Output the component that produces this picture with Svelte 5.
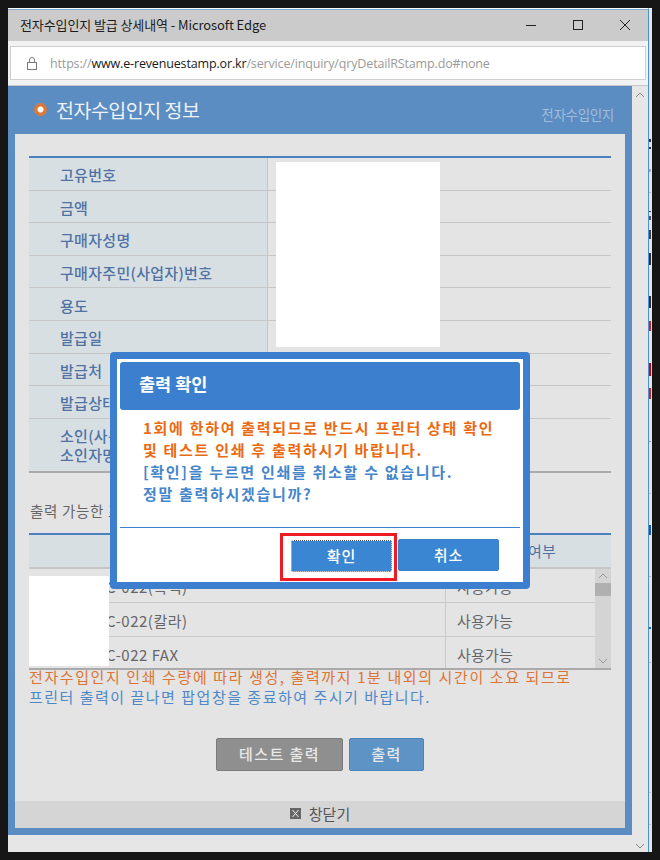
<script lang="ts">
	const infoRows = ['고유번호', '금액', '구매자성명', '구매자주민(사업자)번호', '용도', '발급일', '발급처', '발급상태'];
	const printers = ['C-022(흑백)', 'C-022(칼라)', 'C-022 FAX'];
	// bits of the window behind that peek out on the right edge
	const peeks = [
		{ y: 130, h: 3, c: '#333' },
		{ y: 138, h: 2, c: '#333' },
		{ y: 160, h: 3, c: '#aaa' },
		{ y: 183, h: 1, c: '#bbb' },
		{ y: 202, h: 1, c: '#444' },
		{ y: 207, h: 4, c: '#555' },
		{ y: 221, h: 9, c: '#444' },
		{ y: 244, h: 12, c: '#333' },
		{ y: 287, h: 12, c: '#333' },
		{ y: 312, h: 10, c: '#d0202a' },
		{ y: 354, h: 13, c: '#d0000a' },
		{ y: 379, h: 11, c: '#d0202a' },
		{ y: 432, h: 1, c: '#999' },
		{ y: 484, h: 1, c: '#bbb' },
		{ y: 516, h: 10, c: '#1d5a9c' },
		{ y: 567, h: 1, c: '#bbb' },
		{ y: 618, h: 2, c: '#1d6ab4' },
		{ y: 653, h: 1, c: '#bbb' },
		{ y: 783, h: 1, c: '#c4c4c4' },
		{ y: 815, h: 1, c: '#c4c4c4' }
	];
</script>

<div class="screen">
	<div class="window">
		<div class="titlebar">
			<span class="title">전자수입인지 발급 상세내역 - Microsoft Edge</span>
			<div class="controls">
				<svg width="12" height="12" viewBox="0 0 12 12" fill="none" stroke="#222"><line x1="1" y1="6.5" x2="11" y2="6.5" /></svg>
				<svg width="12" height="12" viewBox="0 0 12 12" fill="none" stroke="#222"><rect x="1.5" y="1.5" width="9" height="9" /></svg>
				<svg width="12" height="12" viewBox="0 0 12 12" fill="none" stroke="#222"><path d="M1 1l10 10M11 1L1 11" /></svg>
			</div>
		</div>
		<div class="addressbar">
			<div class="address">
				<svg width="12" height="15" viewBox="0 0 12 15" fill="none" stroke="#777"><rect x="1.5" y="6.5" width="9" height="7" /><path d="M3.5 6.5V4a2.5 2.5 0 0 1 5 0v2.5" /></svg>
				<span class="url">https://<b>www.e-revenuestamp.or.kr</b>/service/inquiry/qryDetailRStamp.do#none</span>
			</div>
		</div>
		<div class="page">
			<div class="popup">
				<header class="popup-head">
					<span class="dot"></span>
					<h1>전자수입인지 정보</h1>
					<span class="crumb">전자수입인지</span>
				</header>
				<div class="panel">
					<div class="content">
						<div class="info">
							{#each infoRows as label}
								<div class="info-row">
									<div class="info-label">{label}</div>
									<div class="info-value"></div>
								</div>
							{/each}
							<div class="info-row tall">
								<div class="info-label">소인(사용)일시<br />소인자명</div>
								<div class="info-value"></div>
							</div>
							<div class="redact redact-info"></div>
						</div>

						<p class="caption">출력 가능한 프린터 목록</p>

						<div class="printers">
							<div class="printers-head">
								<span class="col-name">프린터명</span>
								<span class="col-state">사용여부</span>
							</div>
							<div class="printers-body">
								<div class="printers-rows">
									{#each printers as name}
										<div class="printer-row">
											<span class="col-name">{name}</span>
											<span class="col-state">사용가능</span>
										</div>
									{/each}
								</div>
								<div class="scrollbar">
									<svg width="10" height="6" viewBox="0 0 10 6" fill="none" stroke="#999"><path d="M1 5l4-4 4 4" /></svg>
									<div class="thumb"></div>
									<svg class="down" width="10" height="6" viewBox="0 0 10 6" fill="none" stroke="#999"><path d="M1 1l4 4 4-4" /></svg>
								</div>
							</div>
							<div class="redact redact-printers"></div>
						</div>

						<div class="notes">
							<p class="orange">전자수입인지 인쇄 수량에 따라 생성, 출력까지 1분 내외의 시간이 소요 되므로</p>
							<p class="blue">프린터 출력이 끝나면 팝업창을 종료하여 주시기 바랍니다.</p>
						</div>

						<div class="actions">
							<button class="btn gray">테스트 출력</button>
							<button class="btn primary">출력</button>
						</div>
					</div>
					<div class="closebar">
						<svg width="11" height="11" viewBox="0 0 11 11"><rect width="11" height="11" fill="#666" /><path d="M2.5 2l6 7M8.5 2l-6 7" stroke="#eee" fill="none" /></svg>
						<span>창닫기</span>
					</div>
				</div>
			</div>
			<div class="page-scroll">
				<svg width="10" height="6" viewBox="0 0 10 6" fill="none" stroke="#888"><path d="M1 5l4-4 4 4" /></svg>
				<svg width="10" height="6" viewBox="0 0 10 6" fill="none" stroke="#888"><path d="M1 1l4 4 4-4" /></svg>
			</div>
		</div>

		<div class="dialog">
			<div class="dialog-inner">
				<div class="dialog-head">출력 확인</div>
				<div class="dialog-text">
					<p class="warn">1회에 한하여 출력되므로 반드시 프린터 상태 확인</p>
					<p class="warn">및 테스트 인쇄 후 출력하시기 바랍니다.</p>
					<p class="ask">[확인]을 누르면 인쇄를 취소할 수 없습니다.</p>
					<p class="ask">정말 출력하시겠습니까?</p>
				</div>
				<div class="dialog-foot">
					<div class="highlight">
						<button class="dialog-btn focused">확인</button>
					</div>
					<button class="dialog-btn">취소</button>
				</div>
			</div>
		</div>
	</div>

	<div class="behind">
		{#each peeks as p}
			<i style="top: {p.y}px; height: {p.h}px; background: {p.c}"></i>
		{/each}
	</div>
</div>

<style>
	:global(body) {
		margin: 0;
		background: #161616;
	}

	* {
		box-sizing: border-box;
	}

	p,
	h1 {
		margin: 0;
		font-weight: normal;
	}

	.screen {
		display: flex;
		align-items: flex-start;
		width: 660px;
		height: 860px;
		padding: 8px 0 0 8px;
		background: #161616;
		font-family: 'Noto Sans CJK KR', 'Noto Sans', sans-serif;
		overflow: hidden;
	}

	.window {
		position: relative;
		display: flex;
		flex-direction: column;
		width: 641px;
		height: 844px;
		border-top: 1px solid #fff;
		border-right: 1px solid #4a90d4;
		background: #e6e6e6;
	}

	.titlebar {
		display: flex;
		flex: none;
		align-items: center;
		justify-content: space-between;
		height: 32px;
		padding: 0 17px 3px 12px;
		background: #cbcbcb;
		border-top: 1px solid #7fa8d0;
	}

	.title {
		font-size: 13px;
		letter-spacing: -0.1px;
		color: #1c1c1c;
	}

	.controls {
		display: flex;
		gap: 35px;
		padding-top: 1px;
	}

	.addressbar {
		flex: none;
		height: 45px;
		padding: 5px 2px;
		background: #f2f2f2;
		border-bottom: 1px solid #c8c8c8;
	}

	.address {
		display: flex;
		align-items: center;
		gap: 12px;
		height: 34px;
		padding-left: 15px;
		background: #fff;
		border: 1px solid #cfcfcf;
	}

	.url {
		font-family: 'Open Sans', sans-serif;
		font-size: 12.5px;
		letter-spacing: -0.15px;
		color: #9a9a9a;
	}

	.url b {
		font-weight: normal;
		color: #1a1a1a;
	}

	.page {
		display: flex;
		flex: 1;
		min-height: 0;
	}

	.popup {
		display: flex;
		flex: none;
		flex-direction: column;
		width: 624px;
		height: 749px;
		padding: 0 7px 7px;
		background: #5b8cc2;
	}

	.popup-head {
		display: flex;
		flex: none;
		align-items: center;
		height: 48px;
		padding: 0 11px 0 19px;
		color: #fff;
	}

	.dot {
		width: 13px;
		height: 13px;
		margin-top: -2px;
		border-radius: 50%;
		background: radial-gradient(circle, #fff 0 2.5px, #d97a3c 3.5px);
	}

	h1 {
		margin: -2px 0 0 9px;
		font-size: 19.5px;
		letter-spacing: -0.5px;
		color: #eef2f7;
	}

	.crumb {
		margin: 8px 0 0 auto;
		font-size: 13.5px;
		letter-spacing: -0.3px;
		color: #a3bcd8;
	}

	.panel {
		display: flex;
		flex: 1;
		flex-direction: column;
		min-height: 0;
		background: #e4e4e4;
	}

	.content {
		position: relative;
		flex: 1;
		min-height: 0;
		padding: 22px 14px 0;
	}

	.info {
		position: relative;
		border-top: 2px solid #4a80bc;
		border-bottom: 2px solid #aaa;
	}

	.info-row {
		display: flex;
		height: 32.6px;
		border-bottom: 1px solid #c6c6c6;
	}

	.info-row.tall {
		height: 52px;
		border-bottom: 0;
		line-height: 19px;
	}

	.info-label {
		display: flex;
		align-items: center;
		width: 239px;
		padding: 2px 0 0 31px;
		background: #d7dfe3;
		border-right: 1px solid #c6c6c6;
		font-size: 15px;
		font-weight: 500;
		letter-spacing: 0.3px;
		color: #4f72a3;
		white-space: nowrap;
	}

	.tall .info-label {
		display: block;
		padding-top: 7px;
	}

	.redact {
		position: absolute;
		background: #fff;
	}

	.redact-info {
		top: 4px;
		left: 247px;
		width: 164px;
		height: 185px;
	}

	.caption {
		margin-top: 28px;
		height: 32px;
		padding-left: 1px;
		font-size: 14.5px;
		line-height: 20px;
		letter-spacing: 0.7px;
		color: #666;
	}

	.printers {
		position: relative;
		border-bottom: 2px solid #aaa;
	}

	.printers-head {
		display: flex;
		align-items: center;
		height: 36px;
		background: #d7dfe3;
		border-top: 2px solid #4a80bc;
		border-bottom: 2px solid #c6c6c6;
		font-size: 15px;
		color: #4f72a3;
	}

	.printers-body {
		display: flex;
		height: 99px;
		overflow: hidden;
	}

	.printers-rows {
		flex: 1;
		min-width: 0;
	}

	.printer-row {
		display: flex;
		align-items: center;
		height: 34px;
		padding-top: 2px;
		border-bottom: 1px solid #c9c9c9;
		font-size: 15px;
		letter-spacing: 0.5px;
		color: #666;
	}

	.col-name {
		width: 416px;
		padding-left: 77px;
	}

	.printers-head .col-name {
		text-align: center;
	}

	.col-state {
		align-self: stretch;
		display: flex;
		align-items: center;
		margin-top: -2px;
		padding: 2px 0 0 11px;
		border-left: 1px solid #c9c9c9;
		letter-spacing: 0.2px;
	}

	.printers-head .col-state {
		border-left: 0;
		margin: 0 0 0 44px;
		padding-top: 0;
	}

	.scrollbar {
		display: flex;
		flex-direction: column;
		align-items: center;
		width: 16px;
		padding-top: 4px;
		background: #d4d4d4;
	}

	.thumb {
		width: 16px;
		height: 13px;
		margin-top: 4px;
		background: #b0b0b0;
	}

	.down {
		margin-top: auto;
		margin-bottom: 4px;
	}

	.redact-printers {
		top: 43px;
		left: 0;
		width: 80px;
		height: 90px;
	}

	.notes {
		margin-top: -3px;
		font-size: 15px;
		line-height: 20px;
		letter-spacing: 1.6px;
		white-space: nowrap;
	}

	.orange {
		color: #dc7434;
	}

	.blue {
		letter-spacing: 1.5px;
		color: #4f88c6;
	}

	.actions {
		display: flex;
		justify-content: center;
		gap: 6px;
		margin-top: 31px;
	}

	.btn {
		height: 33px;
		padding: 0 0 2px;
		border-radius: 2px;
		font-family: inherit;
		font-size: 15px;
		font-weight: 500;
		letter-spacing: 1.4px;
		color: #e8e8e8;
	}

	.btn.gray {
		width: 127px;
		background: #8f8f8f;
		border: 1px solid #7b7b7b;
	}

	.btn.primary {
		width: 75px;
		background: #5e93c6;
		border: 1px solid #4b83bb;
	}

	.closebar {
		display: flex;
		flex: none;
		align-items: center;
		justify-content: center;
		gap: 8px;
		height: 27px;
		padding-bottom: 2px;
		background: #d5d5d5;
		font-size: 15px;
		color: #555;
	}

	.page-scroll {
		display: flex;
		flex: 1;
		flex-direction: column;
		align-items: center;
		justify-content: space-between;
		padding: 6px 0 3px;
	}

	.dialog {
		position: absolute;
		top: 343px;
		left: 102px;
		width: 420px;
		height: 237px;
		padding: 7px;
		border-radius: 4px;
		background: #3b7fce;
	}

	.dialog-inner {
		display: flex;
		flex-direction: column;
		height: 100%;
		padding: 3px 3px 0;
		background: #fff;
	}

	.dialog-head {
		display: flex;
		flex: none;
		align-items: center;
		height: 48px;
		padding: 0 0 6px 19px;
		border-radius: 3px;
		background: #3b7fce;
		font-size: 17.5px;
		font-weight: 700;
		color: #fff;
	}

	.dialog-text {
		flex: 1;
		padding: 7px 0 0 23px;
		font-size: 15px;
		line-height: 22px;
		letter-spacing: 1.7px;
		white-space: nowrap;
	}

	.warn {
		font-weight: 700;
		color: #ea6a12;
	}

	.ask {
		font-weight: 700;
		color: #4485cb;
	}

	.dialog-foot {
		display: flex;
		flex: none;
		align-items: center;
		gap: 1px;
		height: 55px;
		padding-left: 160px;
		border-top: 1px solid #3b7fce;
	}

	.highlight {
		display: flex;
		align-items: center;
		width: 117px;
		height: 48px;
		margin-top: 4px;
		padding-left: 8px;
		border: 3px solid #ed1c24;
	}

	.dialog-btn {
		flex: none;
		width: 101px;
		height: 32px;
		margin-top: -1px;
		border: 1px solid #3a82cc;
		border-radius: 2px;
		background: #3a86d2;
		font-family: inherit;
		font-size: 15px;
		font-weight: 500;
		letter-spacing: 1px;
		color: #fff;
	}

	.dialog-btn.focused {
		margin-top: -3px;
		outline: 1px dotted #fff;
		outline-offset: -1px;
		border-color: #555;
	}

	.behind {
		position: relative;
		width: 3px;
		height: 844px;
		background: #e6e6e6;
		border-top: 1px solid #fff;
	}

	.behind i {
		position: absolute;
		left: 0;
		width: 2px;
	}
</style>
